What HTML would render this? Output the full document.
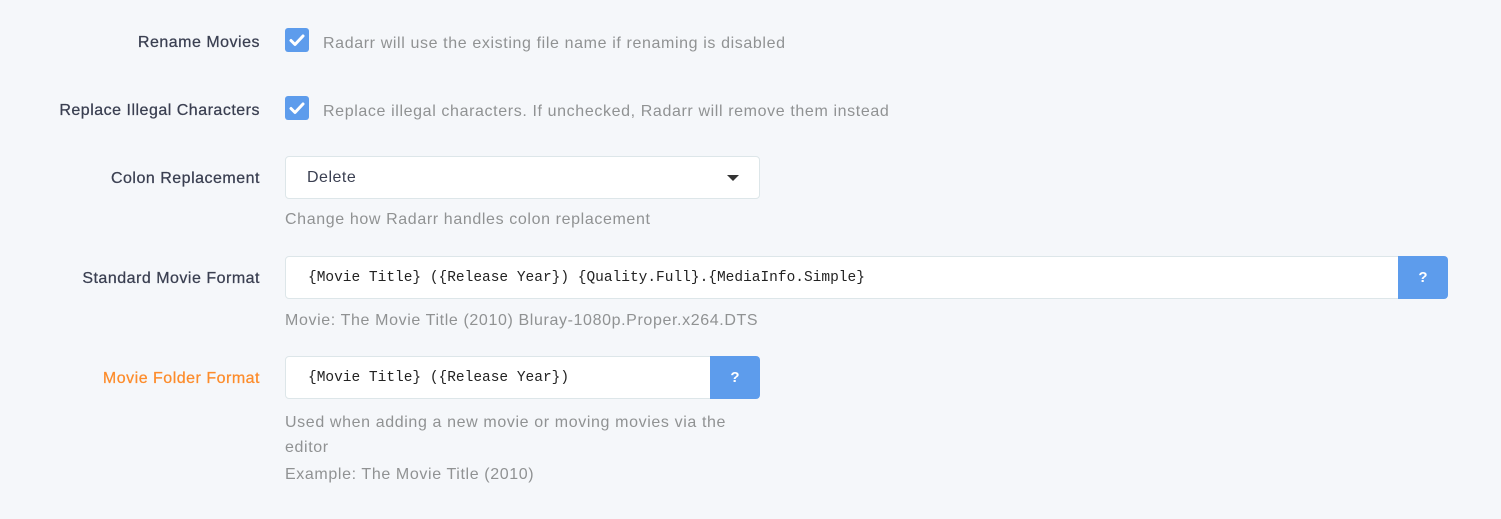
<!DOCTYPE html>
<html><head><style>
body{margin:0;background:#f5f7fa;font-family:"Liberation Sans",sans-serif;width:1501px;height:519px;position:relative;overflow:hidden}
.l{position:absolute;right:1241px;font-size:16px;color:#3a3f51;white-space:nowrap;letter-spacing:0.5px;-webkit-text-stroke:0.25px #3a3f51}
.h{position:absolute;left:285px;font-size:16px;color:#909293;white-space:nowrap;letter-spacing:0.62px}
.cb{position:absolute;left:285px;width:24px;height:24px;background:#5d9cec;border-radius:3px}
.inp{position:absolute;background:#fff;border:1px solid #dde6e9;border-radius:4px;box-sizing:border-box}
.mono{font-family:"Liberation Mono",monospace;font-size:14.5px;color:#222;position:absolute;left:22px;top:13px;white-space:nowrap}
.btn{position:absolute;background:#5d9cec;color:#fff;font-weight:bold;font-size:15px;text-align:center;box-sizing:border-box;padding-top:13px}
</style></head><body>
<div class="l" style="top:34px">Rename Movies</div>
<div class="cb" style="top:28px"><svg width="24" height="24"><path d="M6 12.5l4 4 8-8.5" stroke="#fff" stroke-width="3" fill="none" stroke-linecap="round" stroke-linejoin="round"/></svg></div>
<div class="h" style="left:323px;top:35px">Radarr will use the existing file name if renaming is disabled</div>
<div class="l" style="top:102px">Replace Illegal Characters</div>
<div class="cb" style="top:96px"><svg width="24" height="24"><path d="M6 12.5l4 4 8-8.5" stroke="#fff" stroke-width="3" fill="none" stroke-linecap="round" stroke-linejoin="round"/></svg></div>
<div class="h" style="left:323px;top:103px">Replace illegal characters. If unchecked, Radarr will remove them instead</div>
<div class="l" style="top:170px">Colon Replacement</div>
<div class="inp" style="left:285px;top:156px;width:475px;height:43px"><span style="position:absolute;left:21px;top:12px;font-size:16px;color:#3a3f51;letter-spacing:0.5px">Delete</span><svg style="position:absolute;right:20px;top:18px" width="12" height="7"><path d="M0 0h12L6 6z" fill="#333"/></svg></div>
<div class="h" style="top:211px">Change how Radarr handles colon replacement</div>
<div class="l" style="top:270px">Standard Movie Format</div>
<div class="inp" style="left:285px;top:256px;width:1114px;height:43px;border-radius:4px 0 0 4px"><span class="mono">{Movie Title} ({Release Year}) {Quality.Full}.{MediaInfo.Simple}</span></div>
<div class="btn" style="left:1398px;top:256px;width:50px;height:43px;border-radius:0 4px 4px 0">?</div>
<div class="h" style="top:312px">Movie: The Movie Title (2010) Bluray-1080p.Proper.x264.DTS</div>
<div class="l" style="top:370px;color:#fd8c2b;-webkit-text-stroke:0.25px #fd8c2b">Movie Folder Format</div>
<div class="inp" style="left:285px;top:356px;width:426px;height:43px;border-radius:4px 0 0 4px"><span class="mono">{Movie Title} ({Release Year})</span></div>
<div class="btn" style="left:710px;top:356px;width:50px;height:43px;border-radius:0 4px 4px 0">?</div>
<div class="h" style="top:410px;line-height:25px">Used when adding a new movie or moving movies via the<br>editor</div>
<div class="h" style="top:466px">Example: The Movie Title (2010)</div>
</body></html>
